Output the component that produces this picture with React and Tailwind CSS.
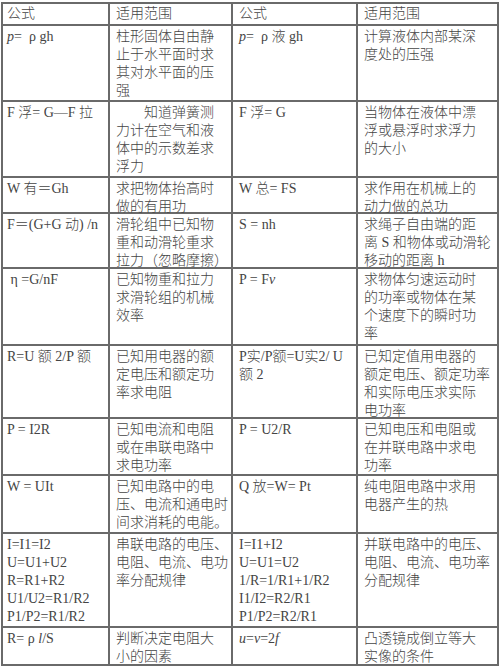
const rows = [
  {
    h: "h-[76px]",
    c: [
      [<><i>p</i>=&nbsp; ρ gh</>],
      ["柱形固体自由静", "止于水平面时求", "其对水平面的压", "强"],
      [<><i>p</i>=&nbsp; ρ 液 gh</>],
      ["计算液体内部某深", "度处的压强"],
    ],
  },
  {
    h: "h-[76px]",
    c: [
      ["F 浮= G—F 拉"],
      ["\u3000\u3000知道弹簧测", "力计在空气和液", "体中的示数差求", "浮力"],
      ["F 浮= G"],
      ["当物体在液体中漂", "浮或悬浮时求浮力", "的大小"],
    ],
  },
  {
    h: "h-[36px]",
    c: [["W 有＝Gh"], ["求把物体抬高时", "做的有用功"], ["W 总= FS"], ["求作用在机械上的", "动力做的总功"]],
  },
  {
    h: "h-[55px]",
    c: [
      ["F＝(G+G 动) /n"],
      ["滑轮组中已知物", "重和动滑轮重求", "拉力（忽略摩擦）"],
      ["S = nh"],
      ["求绳子自由端的距", "离 S 和物体或动滑轮", "移动的距离 h"],
    ],
  },
  {
    h: "h-[77px]",
    c: [
      ["\u00a0η =G/nF"],
      ["已知物重和拉力", "求滑轮组的机械", "效率"],
      [<>P = F<i>v</i></>],
      ["求物体匀速运动时", "的功率或物体在某", "个速度下的瞬时功", "率"],
    ],
  },
  {
    h: "h-[73px]",
    c: [
      ["R=U 额 2/P 额"],
      ["已知用电器的额", "定电压和额定功", "率求电阻"],
      ["P实/P额=U实2/ U", "额 2"],
      ["已知定值用电器的", "额定电压、额定功率", "和实际电压求实际", "电功率"],
    ],
  },
  {
    h: "h-[57px]",
    c: [
      ["P = I2R"],
      ["已知电流和电阻", "或在串联电路中", "求电功率"],
      ["P = U2/R"],
      ["已知电压和电阻或", "在并联电路中求电", "功率"],
    ],
  },
  {
    h: "h-[58px]",
    c: [
      ["W = UIt"],
      ["已知电路中的电", "压、电流和通电时", "间求消耗的电能。"],
      ["Q 放=W= Pt"],
      ["纯电阻电路中求用", "电器产生的热"],
    ],
  },
  {
    h: "h-[94px]",
    c: [
      ["I=I1=I2", "U=U1+U2", "R=R1+R2", "U1/U2=R1/R2", "P1/P2=R1/R2"],
      ["串联电路的电压、", "电阻、电流、电功", "率分配规律"],
      ["I=I1+I2", "U=U1=U2", "1/R=1/R1+1/R2", "I1/I2=R2/R1", "P1/P2=R2/R1"],
      ["并联电路中的电压、", "电阻、电流、电功率", "分配规律"],
    ],
  },
  {
    h: "h-[38px]",
    c: [
      [<>R= ρ <i>l</i>/S</>],
      ["判断决定电阻大", "小的因素"],
      [<><i>u</i>=<i>v</i>=2<i>f</i></>],
      ["凸透镜成倒立等大", "实像的条件"],
    ],
  },
];

const pads = ["pl-[4px]", "pl-[6px]", "pl-[6px]", "pl-[6px]"];

function Cell({ lines, col, h }) {
  return (
    <div className={`${h} ${pads[col]} pt-[2px] border-r-2 border-b-2 border-[#6a6a6a]`}>
      {lines.map((l, i) => (
        <div key={i} className="whitespace-pre leading-[18px]">
          {l}
        </div>
      ))}
    </div>
  );
}

export default function App() {
  const head = ["公式", "适用范围", "公式", "适用范围"];
  return (
    <div
      className="w-[499px] h-[671px] bg-white text-[14px] text-[#444] font-light pt-[2px] pl-[1px]"
      style={{ fontFamily: '"Liberation Serif", "Noto Sans CJK SC", serif' }}
    >
      <div className="grid grid-cols-[107px_123px_125px_141px] w-max border-l-2 border-t-2 border-[#6a6a6a]">
        {head.map((t, i) => (
          <div key={i} className={`h-[22px] ${pads[i]} border-r-2 border-b-2 border-[#6a6a6a] leading-[20px]`}>
            {t}
          </div>
        ))}
        {rows.map((r, ri) =>
          r.c.map((lines, ci) => <Cell key={ri + "-" + ci} lines={lines} col={ci} h={r.h} />)
        )}
      </div>
    </div>
  );
}
